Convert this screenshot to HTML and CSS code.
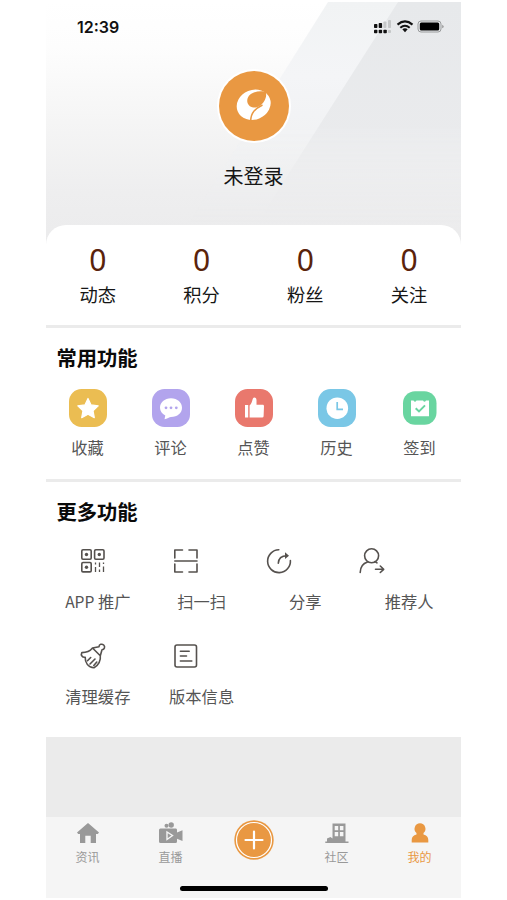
FILE: index.html
```html
<!DOCTYPE html>
<html lang="zh-CN">
<head>
<meta charset="utf-8">
<title>我的</title>
<link rel="stylesheet" href="styles.css">
</head>
<body>
<main class="phone">
  <header class="hero">
    <svg class="hero-bg" viewBox="0 0 415 248" preserveAspectRatio="none">
      <defs>
        <linearGradient id="beam" x1="0" y1="0" x2="0" y2="1"><stop offset="0" stop-color="#f1f3f4"/><stop offset=".3" stop-color="#f4f5f7"/><stop offset="1" stop-color="#ebeced"/></linearGradient>
        <linearGradient id="shade" x1="0" y1="0" x2="0" y2="1"><stop offset="0" stop-color="#e7e9eb"/><stop offset=".6" stop-color="#eaebed"/><stop offset="1" stop-color="#ebeced"/></linearGradient>
        <linearGradient id="fade" x1="0" y1="0" x2="0" y2="1"><stop offset="0" stop-color="#fff"/><stop offset=".5" stop-color="#fff"/><stop offset=".9" stop-color="#000"/></linearGradient>
        <mask id="soft"><rect width="415" height="248" fill="url(#fade)"/></mask>
      </defs>
      <g mask="url(#soft)">
        <path d="M282 0H415V248H126Z" fill="url(#beam)"/>
        <path d="M352 0H415V248H194Z" fill="url(#shade)"/>
      </g>
    </svg>
    <div class="status">
      <span class="time">12:39</span>
      <svg class="status-icons" viewBox="0 0 72 14">
        <g fill="#111"><rect x="1" y="4" width="3.400" height="4" rx=".8"/><rect x="5.700" y="3" width="3.400" height="5" rx=".8"/><rect x="1" y="9.800" width="3.400" height="3.400" rx=".8"/><rect x="5.700" y="9.800" width="3.400" height="3.400" rx=".8"/><rect x="10.400" y="9.800" width="3.400" height="3.400" rx=".8"/></g>
        <g fill="#c5c7c8"><rect x="10.400" y="1.500" width="3" height="6.500" rx=".8"/><rect x="15" y="0" width="3" height="8" rx=".8"/><rect x="15" y="10" width="3" height="3" rx=".8"/></g>
        <g fill="none" stroke="#111" stroke-width="2.100"><path d="M24.500 4.600Q32-1.700 39.500 4.600M27.300 7.700Q32 3.800 36.700 7.700"/></g>
        <path d="M29.300 9.300Q32 7.400 34.700 9.300L32 12.200Z" fill="#111"/>
        <rect x="45" y="1" width="23" height="11" rx="3" fill="none" stroke="#999b9c"/>
        <rect x="46.800" y="2.600" width="19.400" height="7.800" rx="1.500"/>
        <path d="M69.300 4.700Q72 6.500 69.300 8.300Z" fill="#888"/>
      </svg>
    </div>
    <div class="profile">
      <svg class="avatar" viewBox="0 0 76 76">
        <circle cx="38" cy="38" r="37" fill="#fff"/>
        <circle cx="38" cy="38" r="35" fill="#e99842"/>
        <ellipse cx="37.700" cy="36.700" rx="17.300" ry="14.800" transform="rotate(-22 37.700 36.700)" fill="#fff"/>
        <path d="M51 24.500C45 21.500 34 24 31.700 30C30 35 33 39 37.500 39.500C40 39.800 42 39 43.500 38C47.500 35.500 51 30 50 25Z" fill="#e99842"/>
        <path d="M46.500 37C39.500 40.500 34.500 44.500 34.700 53.500" fill="none" stroke="#e99842" stroke-width="1.500"/>
      </svg>
      <div class="name">未登录</div>
    </div>
  </header>

  <section class="stats">
    <div class="stat"><b>0</b><span>动态</span></div>
    <div class="stat"><b>0</b><span>积分</span></div>
    <div class="stat"><b>0</b><span>粉丝</span></div>
    <div class="stat"><b>0</b><span>关注</span></div>
  </section>

  <section class="common">
    <h2>常用功能</h2>
    <div class="features">
      <div class="feature"><svg viewBox="0 0 38 38"><rect width="38" height="38" rx="12.500" fill="#ebbd52"/><path d="M19 9.500L22.100 15.900L29.200 16.800L24 21.700L25.300 28.700L19 25.300L12.700 28.700L14 21.700L8.800 16.800L15.900 15.900Z" fill="#fff" stroke="#fff" stroke-width="1.200" stroke-linejoin="round"/></svg><span>收藏</span></div>
      <div class="feature"><svg viewBox="0 0 38 38"><rect width="38" height="38" rx="12.500" fill="#b2a4ed"/><path d="M19 9.200C25.500 9.200 30 13.500 30 18.700S25.500 28 19 28C17.500 28 15 29.800 12.500 30.200L13.300 26.400C10 24.700 8 22 8 18.700C8 13.500 12.500 9.200 19 9.200Z" fill="#fff"/><g fill="#b2a4ed"><circle cx="14" cy="18.800" r="1.400"/><circle cx="19" cy="18.800" r="1.400"/><circle cx="24.300" cy="18.800" r="1.400"/></g></svg><span>评论</span></div>
      <div class="feature"><svg viewBox="0 0 38 38"><rect width="38" height="38" rx="12.500" fill="#e9786d"/><path d="M10 16H13.200V28.500H10ZM14.600 28.500V16.500C16.800 14.500 17 12 17.800 9.700C18.800 7.800 21.300 8.500 21.500 11V15.800H28.200Q29 16 29 17.200L28.600 27.200Q28.500 28.500 27.200 28.500Z" fill="#fff"/></svg><span>点赞</span></div>
      <div class="feature"><svg viewBox="0 0 38 38"><rect width="38" height="38" rx="12.500" fill="#7ac7e6"/><circle cx="19.300" cy="19.200" r="10.800" fill="#fff"/><path d="M19.200 13V20.300H25" fill="none" stroke="#7ac7e6" stroke-width="1.700"/></svg><span>历史</span></div>
      <div class="feature"><svg viewBox="0 0 38 38"><rect x="2" y="2.300" width="33.500" height="33.500" rx="12" fill="#69d5a0"/><path d="M10 11.500H12.500Q14 14 15.500 11.500H22Q23.500 14 25 11.500H28V27.200H10Z" fill="#fff"/><path d="M14.700 19.200L18 22.400L24 16.400" fill="none" stroke="#69d5a0" stroke-width="2"/></svg><span>签到</span></div>
    </div>
  </section>

  <section class="more">
    <h2>更多功能</h2>
    <div class="icons">
      <svg viewBox="0 0 28 28"><rect x="2.800" y="2.800" width="9.400" height="9.400" rx="1.200"/><rect x="15.600" y="2.800" width="9.400" height="9.400" rx="1.200"/><rect x="2.800" y="15.500" width="9.400" height="9.400" rx="1.200"/><g class="solid"><circle cx="7.500" cy="7.500" r="1.700"/><circle cx="20.300" cy="7.500" r="1.700"/><circle cx="7.500" cy="20.200" r="1.700"/></g><path class="thin" d="M16.500 15.500V17.500M16.500 20V25M20.500 15.500V20M20.500 22.500V25M24.500 15.500V17M24.500 19.500V25"/></svg>
      <svg viewBox="0 0 28 28"><path d="M2.800 11V3H10.500M17 3H25V11M2.800 17V25H10.500M17 25H25V17M2.800 14H25"/></svg>
      <svg viewBox="0 0 28 28"><path d="M13.800 2.800A11.400 11.400 0 1 0 25.400 13.500M13.300 16.300C13.500 10.500 16.500 8.700 22 8.700"/><path class="solid" d="M20 5.300L24 8.700L20 12Z"/></svg>
      <svg viewBox="0 0 28 28"><circle cx="13.600" cy="8.800" r="7"/><path d="M2.200 25.500C2.300 20.500 5 16.400 9.500 15M17 14.500L19 15.800M17.500 22.300H25.500M22.300 19L25.700 22.300L22.300 25.500"/></svg>
    </div>
    <div class="labels"><span><i class="latin">APP</i> 推广</span><span>扫一扫</span><span>分享</span><span>推荐人</span></div>
    <div class="icons">
      <svg viewBox="0 0 28 28"><path d="M13.500 6L21.300 13.700M13.500 6L20 4.700C20 2.200 23 1.500 24.700 3C26.400 4.800 25.500 7.700 23 7.700L21.300 13.700M13.500 6C10.500 9.800 7 10.600 2.800 10.600C1.500 13.300 3.300 15.700 6.200 15.200C6 20.500 9 25.500 15 25.800C19.500 23.500 22 18.500 21.300 13.700M8.500 18.700L11.700 15.500M11 22L16 17M14.800 23.500L17.800 20"/></svg>
      <svg viewBox="0 0 28 28"><rect x="3" y="3" width="21.500" height="22" rx="2"/><path d="M8.400 9.200H17.200M8.400 14H14.500M8.400 19H19.800"/></svg>
    </div>
    <div class="labels"><span>清理缓存</span><span>版本信息</span></div>
  </section>

  <nav class="tabs">
    <div class="tab"><svg viewBox="0 0 24 22"><path d="M12 1L23 10.600L21.800 12H20V21H14.700V13.800H9.300V21H4V12H2.200L1 10.600Z"/></svg><span>资讯</span></div>
    <div class="tab"><svg viewBox="0 0 24 22"><circle cx="7.500" cy="3.800" r="2"/><circle cx="12.200" cy="3" r="2.700"/><path d="M1.500 6.400H17Q18 6.400 18 8V10.500L23.500 8.200V19L18 16.700V19.500Q18 21 16.500 21H1.500Q0 21 0 19.500V8Q0 6.400 1.500 6.400Z"/><path d="M8 10V17.500L13.500 13.500Z" fill="#999" stroke="#f5f5f5" stroke-width="1.400"/></svg><span>直播</span></div>
    <div class="tab"><svg class="add" viewBox="0 0 40 40"><circle class="disc" cx="20" cy="20" r="19.700"/><circle cx="20" cy="20" r="17.500" fill="none" stroke="#fff" stroke-width="1.200"/><path d="M20 11.500V28.500M11.500 20H28.500" stroke="#fff" stroke-width="2.200" stroke-linecap="round"/></svg></div>
    <div class="tab"><svg viewBox="0 0 24 22"><path d="M.3 21V19.500H2V16.500L5.500 15L7.500 16.500V1.500H20.500V19.500H23.500V21Z"/><path d="M9.700 4H13.200V8.300H9.700ZM14.900 4H18.400V8.300H14.900ZM9.700 10H13.200V14.300H9.700ZM14.900 10H18.400V14.300H14.900Z" fill="#f5f5f5"/></svg><span>社区</span></div>
    <div class="tab active"><svg viewBox="0 0 24 22"><path d="M12 1.300A5.500 5.500 0 0 1 15.500 11V12.500Q20.300 13.800 20.300 18V20.600H3.700V18Q3.700 13.800 8.500 12.500V11A5.500 5.500 0 0 1 12 1.300Z"/></svg><span>我的</span></div>
  </nav>
  <div class="home"><i></i></div>
</main>
</body>
</html>
```
FILE: styles.css
```css
* { box-sizing: border-box; }
body {
  margin: 0;
  background: #fff;
  color: #161616;
  font-family: "Noto Sans CJK SC", sans-serif;
}
svg { display: block; }
.phone {
  width: 415px;
  height: 896px;
  margin: 2px auto 0;
  display: flex;
  flex-direction: column;
  background: #ebebeb;
}
.hero {
  position: relative;
  height: 248px;
  flex: none;
  background: linear-gradient(#fff 0, #fdfdfd 45px, #f5f5f5 120px, #eeeeef 190px, #ebebec 100%);
}
.hero-bg { position: absolute; inset: 0; width: 100%; height: 100%; }
.status {
  position: relative;
  height: 50px;
  padding: 0 16px 0 31px;
  display: flex;
  align-items: center;
  justify-content: space-between;
}
.time { font: 600 16px/20px Inter, sans-serif; color: #111; }
.status-icons { width: 72px; height: 14px; }
.profile {
  position: relative;
  padding-top: 16px;
  display: flex;
  flex-direction: column;
  align-items: center;
}
.avatar { width: 76px; height: 76px; }
.name { margin-top: 17px; font-size: 20px; line-height: 30px; }
.stats {
  position: relative;
  flex: none;
  height: 98px;
  margin-top: -25px;
  padding-top: 20px;
  display: grid;
  grid-template-columns: repeat(4, 1fr);
  height: 100px;
  background: #fff;
  border-radius: 20px 20px 0 0;
}
.stat { display: flex; flex-direction: column; align-items: center; }
.stat b { font-family: "Noto Sans", sans-serif; font-size: 30px; font-weight: 400; line-height: 30px; color: #5a230b; }
.stat span { margin-top: 7px; font-size: 18.3px; line-height: 24px; }
.common { flex: none; height: 151px; margin-top: 3px; background: #fff; }
h2 {
  margin: 0;
  padding: 14px 0 0 10.5px;
  font-size: 20.3px;
  line-height: 30px;
  font-weight: 700;
  color: #0a0a0a;
}
.features { display: grid; grid-template-columns: repeat(5, 1fr); margin-top: 17px; }
.feature { display: flex; flex-direction: column; align-items: center; }
.feature svg { width: 38px; height: 38px; }
.feature span { margin-top: 8px; font-size: 16.2px; line-height: 24px; color: #555; }
.more { flex: none; height: 255px; margin-top: 3px; background: #fff; }
.icons { display: grid; grid-template-columns: repeat(4, 93px); justify-items: center; margin-top: 21px; }
.icons svg {
  width: 28px;
  height: 28px;
  fill: none;
  stroke: #55514e;
  stroke-width: 1.6;
  stroke-linecap: round;
  stroke-linejoin: round;
}
.icons .thin { stroke-width: 1.3; stroke-linecap: butt; }
.icons .solid { fill: #55514e; stroke: none; }
.labels {
  display: grid;
  grid-template-columns: repeat(4, 1fr);
  margin-top: 14px;
  text-align: center;
  font-size: 16.3px;
  line-height: 24px;
  color: #555;
}
.latin { font-style: normal; font-size: 15.6px; }
.labels + .icons { margin-top: 29px; }
.tabs {
  flex: none;
  height: 54px;
  margin-top: 80px;
  display: grid;
  grid-template-columns: repeat(5, 1fr);
  background: #f5f5f5;
}
.tab { padding-top: 5px; display: flex; flex-direction: column; align-items: center; color: #999; }
.tab svg { width: 24px; height: 22px; fill: currentColor; }
.tab span { margin-top: 4px; font-size: 12px; line-height: 18px; }
.tab.active { color: #e99842; }
.tab .add { width: 40px; height: 40px; margin-top: -2px; }
.add .disc { fill: #e99842; }
.home { flex: 1; padding-top: 15px; background: #f5f5f5; }
.home i { display: block; width: 148px; height: 5px; margin: 0 auto; border-radius: 3px; background: #000; }
```
